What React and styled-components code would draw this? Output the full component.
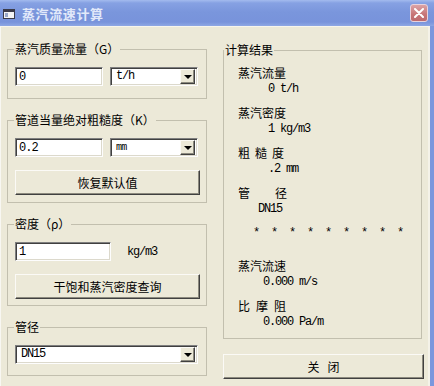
import React from "react";
import styled, { createGlobalStyle } from "styled-components";

const CJK = `"Noto Sans CJK SC", "Noto Sans", sans-serif`;
const MONO = `"Liberation Mono", "Noto Sans CJK SC", monospace`;

const GlobalStyle = createGlobalStyle`
  html, body {
    margin: 0;
    padding: 0;
  }
  body {
    width: 434px;
    height: 386px;
    overflow: hidden;
    background: #ece9d8;
  }
`;

const App = () => {
  return (
    <>
      <GlobalStyle />
      <Window>
        <TitleBar>
          <TitleIcon width="13" height="12" viewBox="0 0 13 12">
            <rect x="0.5" y="1.5" width="11" height="9" fill="#f4f4f4" stroke="#3a3a48" />
            <rect x="1" y="2" width="10" height="2" fill="#3a3a48" />
            <rect x="2" y="5" width="3" height="4" fill="#9aa8c8" />
          </TitleIcon>
          <Title>蒸汽流速计算</Title>
          <CloseX>
            <svg width="10" height="10" viewBox="0 0 10 10">
              <path d="M1 1 L9 9 M9 1 L1 9" stroke="#fff" strokeWidth="2" strokeLinecap="round" />
            </svg>
          </CloseX>
        </TitleBar>

        <Body>
          <LeftCol>
            <Group $pb={12}>
              <Legend>蒸汽质量流量（G）</Legend>
              <Row>
                <Field $w={88} value="0" readOnly />
                <Select $w={88}>
                  <SelectText>t/h</SelectText>
                  <DropBtn>
                    <Arrow />
                  </DropBtn>
                </Select>
              </Row>
            </Group>

            <Group $pb={7}>
              <Legend>管道当量绝对粗糙度（K）</Legend>
              <Row>
                <Field $w={88} value="0.2" readOnly />
                <Select $w={88}>
                  <SelectText $small>mm</SelectText>
                  <DropBtn>
                    <Arrow />
                  </DropBtn>
                </Select>
              </Row>
              <Button>恢复默认值</Button>
            </Group>

            <Group $pb={6}>
              <Legend>密度（ρ）</Legend>
              <Row>
                <Field $w={96} value="1" readOnly />
                <Unit>kg/m3</Unit>
              </Row>
              <Button>干饱和蒸汽密度查询</Button>
            </Group>

            <Group $pb={11}>
              <Legend>管径</Legend>
              <Select $w={183}>
                <SelectText>DN15</SelectText>
                <DropBtn>
                  <Arrow />
                </DropBtn>
              </Select>
            </Group>
          </LeftCol>

          <RightCol>
            <ResultGroup>
              <Legend $offset={-14}>计算结果</Legend>
              <Pair>
                <ResultLabel>蒸汽流量</ResultLabel>
                <ResultValue $indent={30}>0 t/h</ResultValue>
              </Pair>
              <Pair>
                <ResultLabel>蒸汽密度</ResultLabel>
                <ResultValue $indent={30}>1 kg/m3</ResultValue>
              </Pair>
              <Pair>
                <ResultLabel $sp={5}>粗糙度</ResultLabel>
                <ResultValue $indent={30}>.2 mm</ResultValue>
              </Pair>
              <Pair>
                <ResultLabel $sp={25}>管径</ResultLabel>
                <ResultValue $indent={20}>DN15</ResultValue>
              </Pair>
              <Stars>*********</Stars>
              <Pair>
                <ResultLabel>蒸汽流速</ResultLabel>
                <ResultValue $indent={25}>0.000 m/s</ResultValue>
              </Pair>
              <Pair>
                <ResultLabel $sp={6}>比摩阻</ResultLabel>
                <ResultValue $indent={25}>0.000 Pa/m</ResultValue>
              </Pair>
            </ResultGroup>
            <Button $wide>
              <CloseLabel>关闭</CloseLabel>
            </Button>
          </RightCol>
        </Body>
      </Window>
    </>
  );
};

const Window = styled.div`
  width: 434px;
  height: 386px;
  display: flex;
  flex-direction: column;
  background: #7b97dd;
  overflow: hidden;
`;

const TitleBar = styled.div`
  height: 26px;
  flex: none;
  display: flex;
  align-items: center;
  padding: 0 6px 0 3px;
  box-sizing: border-box;
  background: linear-gradient(
    to bottom,
    #a3bbee 0,
    #86a1e3 3px,
    #7a96dc 12px,
    #7893db 22px,
    #8ea7e4 26px
  );
`;

const TitleIcon = styled.svg`
  flex: none;
  margin-top: 1px;
`;

const Title = styled.div`
  flex: 1;
  margin-left: 6px;
  font-family: ${CJK};
  font-size: 13px;
  font-weight: 700;
  color: #e2e9fa;
  letter-spacing: 0.6px;
`;

const CloseX = styled.div`
  width: 18px;
  height: 18px;
  box-sizing: border-box;
  display: flex;
  align-items: center;
  justify-content: center;
  border: 1px solid #e8d2dc;
  border-radius: 3px;
  background: linear-gradient(to bottom, #dba3a6, #c77476 60%, #bd6a6e);
`;

const Body = styled.div`
  flex: 1;
  margin-right: 4px;
  display: flex;
  gap: 16px;
  padding: 15px 6px 0 7px;
  background: #ece9d8;
  border-top: 1px solid #f7f5ec;
  box-shadow: inset 1px 0 0 #f8f7f2, inset -2px 0 0 #f4f2e8;
`;

const LeftCol = styled.div`
  width: 200px;
  display: flex;
  flex-direction: column;
  gap: 14px;
`;

const RightCol = styled.div`
  width: 201px;
  display: flex;
  flex-direction: column;
  margin-top: 1px;
`;

const Group = styled.fieldset`
  margin: 0;
  min-width: 0;
  padding: 11px 6px ${(p) => p.$pb}px 7px;
  border: 1px solid #c2bfae;
  display: flex;
  flex-direction: column;
  gap: 13px;
`;

const ResultGroup = styled.fieldset`
  margin: 0;
  width: 199px;
  height: 296px;
  box-sizing: border-box;
  min-width: 0;
  padding: 8px 6px 0 14px;
  border: 1px solid #c2bfae;
`;

const Legend = styled.legend`
  font-family: ${CJK};
  font-size: 12px;
  line-height: 14px;
  color: #000;
  padding: 0 1px;
  margin-left: ${(p) => p.$offset ?? -1}px;
`;

const Row = styled.div`
  display: flex;
  align-items: center;
  gap: 7px;
`;

const sunken = `
  box-sizing: border-box;
  height: 19px;
  border: 1px solid;
  border-color: #7f7f7f #fdfdfd #fdfdfd #7f7f7f;
  box-shadow: inset 1px 1px 0 #404040, inset -1px -1px 0 #dcd9cc;
  background: #fff;
`;

const Field = styled.input`
  ${sunken}
  width: ${(p) => p.$w}px;
  margin: 0;
  padding: 0 3px;
  outline: none;
  font-family: ${MONO};
  font-size: 12px;
  letter-spacing: -1px;
  color: #000;
`;

const Select = styled.div`
  ${sunken}
  width: ${(p) => p.$w}px;
  display: flex;
  align-items: center;
  padding: 2px;
`;

const SelectText = styled.span`
  flex: 1;
  padding-left: 3px;
  font-family: ${MONO};
  font-size: ${(p) => (p.$small ? 10 : 12)}px;
  letter-spacing: ${(p) => (p.$small ? -0.8 : -1.2)}px;
  color: #000;
  line-height: 15px;
`;

const raised = `
  box-sizing: border-box;
  background: #ece9d8;
  border: 1px solid;
  border-color: #fbfaf6 #404040 #404040 #fbfaf6;
  box-shadow: inset -1px -1px 0 #8c8a7e;
`;

const DropBtn = styled.div`
  ${raised}
  width: 15px;
  height: 15px;
  display: flex;
  align-items: center;
  justify-content: center;
`;

const Arrow = styled.span`
  width: 0;
  height: 0;
  border-left: 4px solid transparent;
  border-right: 4px solid transparent;
  border-top: 4px solid #000;
  margin-top: 1px;
`;

const Unit = styled.span`
  margin-left: 9px;
  font-family: ${MONO};
  font-size: 12px;
  letter-spacing: -1.2px;
  color: #000;
`;

const Button = styled.div`
  ${raised}
  width: ${(p) => (p.$wide ? 201 : 185)}px;
  height: 25px;
  margin-top: ${(p) => (p.$wide ? 15 : 0)}px;
  display: flex;
  align-items: center;
  justify-content: center;
  font-family: ${CJK};
  font-size: 12px;
  color: #000;
`;

const CloseLabel = styled.span`
  letter-spacing: 8px;
  margin-right: -8px;
`;

const Pair = styled.div`
  margin-bottom: 8px;
`;

const ResultLabel = styled.div`
  font-family: ${CJK};
  font-size: 12px;
  line-height: 16px;
  color: #000;
  letter-spacing: ${(p) => p.$sp ?? 0}px;
`;

const ResultValue = styled.div`
  padding-left: ${(p) => p.$indent}px;
  font-family: ${MONO};
  font-size: 12px;
  line-height: 16px;
  letter-spacing: -1.2px;
  color: #000;
  white-space: pre;
`;

const Stars = styled.div`
  padding-left: 15px;
  margin-bottom: 17px;
  font-family: ${MONO};
  font-size: 12px;
  line-height: 16px;
  letter-spacing: 10.8px;
  color: #000;
`;

export default App;
